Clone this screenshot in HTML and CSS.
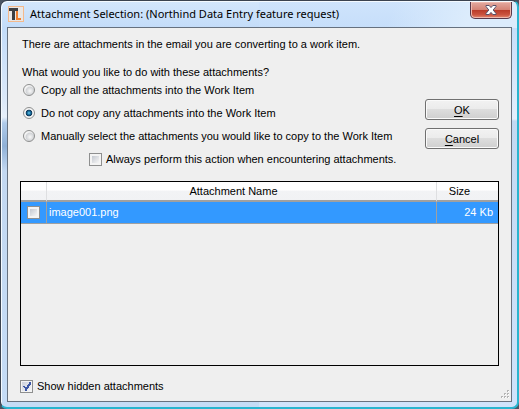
FILE: index.html
```html
<!DOCTYPE html>
<html lang="en">
<head>
<meta charset="utf-8">
<title>Attachment Selection</title>
<link rel="stylesheet" href="styles.css">
</head>
<body>
<div class="window">
  <header class="titlebar">
    <svg class="app-icon" viewBox="0 0 16 16" aria-hidden="true">
      <rect x=".5" y=".5" width="15" height="15" fill="#e9e7e6" stroke="#f4b98c"/>
      <path d="M1 2h9v3H7v9H4V5H1z" fill="#3d3f43"/>
      <path d="M8 5h2v7h3v2H8z" fill="#f08030"/>
    </svg>
    <h1 class="title">Attachment Selection: (Northind Data Entry feature request)</h1>
    <button class="close" type="button" aria-label="Close">
      <svg viewBox="0 0 12 10" aria-hidden="true">
        <path d="M1 .5h3.200L6 2.600 7.800.5H11v1L8.200 5 11 8.500v1H7.800L6 7.400 4.200 9.500H1v-1L3.800 5 1 1.500z" fill="#fff" stroke="#59516a"/>
      </svg>
    </button>
  </header>
  <main class="client">
    <p class="intro">There are attachments in the email you are converting to a work item.</p>
    <div class="choices">
      <fieldset class="options">
        <legend>What would you like to do with these attachments?</legend>
        <label class="option"><input type="radio" name="action">Copy all the attachments into the Work Item</label>
        <label class="option"><input type="radio" name="action" checked>Do not copy any attachments into the Work Item</label>
        <label class="option"><input type="radio" name="action">Manually select the attachments you would like to copy to the Work Item</label>
        <label class="option always"><input type="checkbox">Always perform this action when encountering attachments.</label>
      </fieldset>
      <div class="buttons">
        <button class="button" type="button"><u>O</u>K</button>
        <button class="button" type="button"><u>C</u>ancel</button>
      </div>
    </div>
    <div class="list">
      <table>
        <colgroup><col class="col-check"><col><col class="col-size"></colgroup>
        <thead>
          <tr><th></th><th class="name-head">Attachment Name</th><th class="size-head">Size</th></tr>
        </thead>
        <tbody>
          <tr><td class="check"><input type="checkbox" aria-label="image001.png"></td><td>image001.png</td><td class="size">24 Kb</td></tr>
        </tbody>
      </table>
    </div>
    <footer class="footer">
      <label class="option"><input type="checkbox" checked>Show hidden attachments</label>
      <svg class="grip" viewBox="0 0 8 8" aria-hidden="true">
        <path d="M7 1h1v1H7zM7 4h1v1H7zM4 4h1v1H4zM7 7h1v1H7zM4 7h1v1H4zM1 7h1v1H1z" fill="#fff"/>
        <path d="M6 0h2v1H7v1H6zM6 3h2v1H7v1H6zM3 3h2v1H4v1H3zM6 6h2v1H7v1H6zM3 6h2v1H4v1H3zM0 6h2v1H1v1H0z" fill="#b4b4b4"/>
      </svg>
    </footer>
  </main>
</div>
</body>
</html>
```
FILE: styles.css
```css
* { box-sizing: border-box; }

body {
  margin: 0;
  background: #4b5563;
  color: #000;
  font: 11px/16px "Liberation Sans", Arial, sans-serif;
}

.window {
  display: flex;
  flex-direction: column;
  height: 100vh;
  padding: 1px 5px 5px 6px;
  border: 1px solid #3b4350;
  border-right: 2px solid #28b4cf;
  border-bottom: 2px solid #28b4cf;
  border-radius: 7px;
  background:
    linear-gradient(115deg, transparent 75%, #dcecfc 90%) top / 100% 27px no-repeat,
    linear-gradient(#d4e7fc 0, #c3dcf9 27px, #dce9f9 100px, #e6effa 116px, #b0cbea 122px, #8fb0d6 145px, #c3d8f1 170px, #c5dcf6 100%) left / 50% 100% no-repeat,
    linear-gradient(#cfe4fc 0, #c6defa 27px, #e4effc 118px, #c3d9f2 120px, #cfe3fb 100%);
  box-shadow: inset 1px 1px #f4faff;
}

.titlebar {
  display: flex;
  align-items: flex-start;
  height: 25px;
  padding-left: 1px;
}

.app-icon { width: 16px; height: 16px; margin-top: 4px; }

.title {
  flex: 1;
  margin: 3px 0 0 6px;
  font: 11px/18px "Noto Sans", "Open Sans", sans-serif;
  white-space: nowrap;
}

.close {
  display: flex;
  align-items: center;
  justify-content: center;
  width: 42px;
  height: 17px;
  padding: 0;
  border: 1px solid #59384a;
  border-top: 0;
  border-radius: 0 0 5px 5px;
  background: linear-gradient(#e3aaa1, #d58375 48%, #b93a28 50%, #cb5440 80%, #e48a72);
  box-shadow: inset 0 0 0 1px #efb9ae;
}

.close svg { width: 12px; height: 10px; }

.client {
  flex: 1;
  display: flex;
  flex-direction: column;
  padding: 8px 12px 7px;
  border: 1px solid #66717f;
  background: #efefef;
}

.intro { margin: 0 0 12px 2px; }

.choices {
  display: flex;
  justify-content: space-between;
}

.options {
  display: flex;
  flex-direction: column;
  gap: 7px;
  min-width: 0;
  margin: 0 0 0 2px;
  padding: 0;
  border: 0;
  white-space: nowrap;
}

legend { padding: 0; margin-bottom: 2px; }

.option {
  display: flex;
  align-items: center;
  gap: 4px;
}

.always { margin-left: 67px; }

input {
  flex: none;
  appearance: none;
  width: 13px;
  height: 13px;
  margin: 0;
  border: 1px solid #8e8f8f;
  background: linear-gradient(135deg, #c4c8d0, #f6f6f6) center / 7px 7px no-repeat #f4f4f4;
}

input[type="radio"] {
  width: 12px;
  height: 12px;
  margin: 0 2px 0 1px;
  border-radius: 50%;
  background: radial-gradient(circle at 60% 60%, #f8f8f8, #d2d4d7 45%, #f4f4f4 60%);
}

input[type="radio"]:checked {
  background: radial-gradient(circle at 50% 50%, #7fd0ee 0, #1f84b5 18%, #0f3557 42%, #f4f4f4 52%);
}

input[type="checkbox"]:checked {
  background:
    linear-gradient(45deg, transparent 38%, #3d57a5 39%, #3d57a5 66%, transparent 67%) 2px 5px / 4px 4px no-repeat,
    linear-gradient(125deg, transparent 38%, #3d57a5 39%, #3d57a5 61%, transparent 62%) 4px 1px / 6px 9px no-repeat,
    linear-gradient(135deg, #cdd1dc, #f6f6f6) center / 9px 9px no-repeat #f4f4f4;
}

.buttons {
  display: flex;
  flex-direction: column;
  gap: 8px;
  padding-top: 35px;
}

.button {
  width: 74px;
  height: 21px;
  padding: 0;
  border: 1px solid #707070;
  border-radius: 3px;
  background: linear-gradient(#f2f2f2, #ebebeb 49%, #dddddd 50%, #cfcfcf);
  box-shadow: inset 0 0 0 1px #fafafa;
  color: #000;
  font: 11px/16px "Liberation Sans", Arial, sans-serif;
}

u { text-underline-offset: 2px; }

.list {
  flex: 1;
  margin-top: 14px;
  border: 1px solid #000;
}

table {
  width: 100%;
  table-layout: fixed;
  border-collapse: separate;
  border-spacing: 0;
}

.col-check { width: 26px; }
.col-size { width: 61px; }

th {
  height: 20px;
  padding: 0 4px;
  border-right: 1px solid #dedfe1;
  border-bottom: 2px solid #a0a0a0;
  background: linear-gradient(#fff 45%, #f2f3f5 50%, #f1f2f4);
  font-weight: normal;
}

th:last-child, td:last-child { border-right: 0; }

.name-head, .size-head { padding-right: 20px; }

td {
  height: 22px;
  padding: 0 2px 2px;
  border-right: 1px solid #a0a0a0;
  border-bottom: 1px solid #a0a0a0;
  background: #3399ff;
  color: #fff;
}

.check { padding: 0 0 0 6px; }
.check input { display: block; }
.size { padding-right: 5px; text-align: right; }

.footer {
  display: flex;
  align-items: center;
  justify-content: space-between;
  margin-top: 12px;
}

.grip {
  width: 8px;
  height: 8px;
  align-self: flex-end;
  margin: 0 -10px -4px 0;
}
```
